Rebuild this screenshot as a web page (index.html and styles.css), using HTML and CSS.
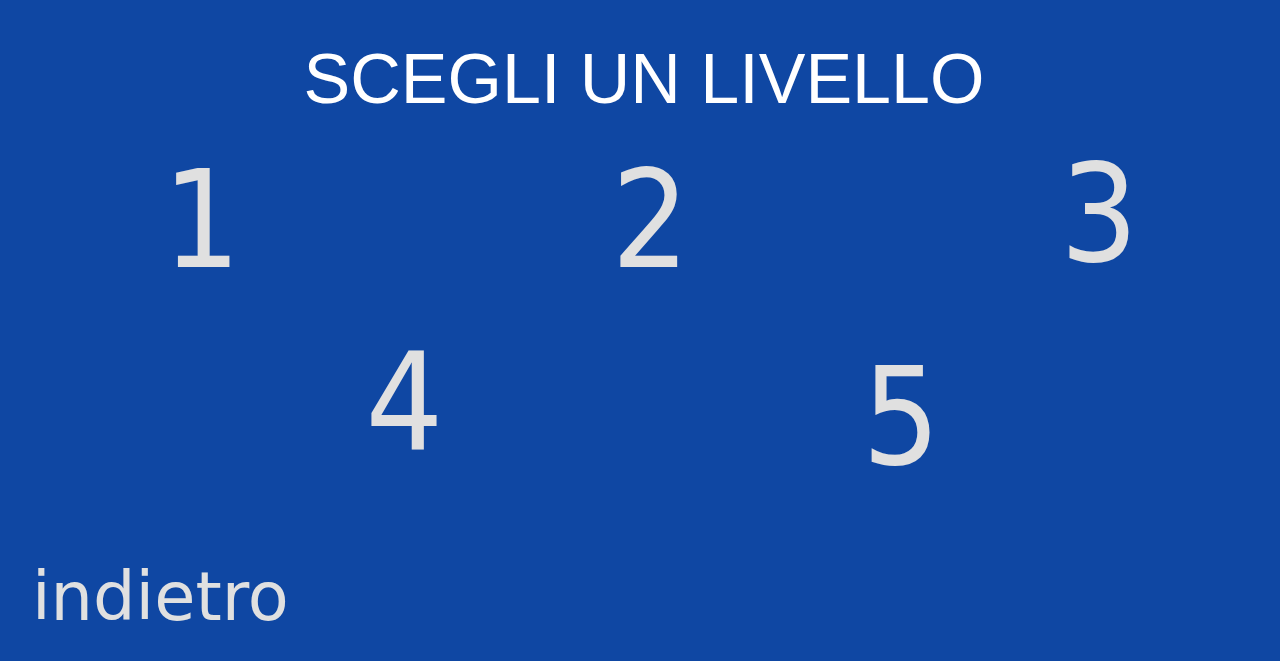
FILE: index.html
```
<!DOCTYPE html>
<html lang="it">
<head>
  <meta charset="utf-8">
  <meta name="viewport" content="width=device-width, initial-scale=1">
  <title>Scegli un livello</title>
  <link rel="stylesheet" href="styles.css">
</head>
<body>
  <h1 class="title">SCEGLI UN LIVELLO</h1>

  <!-- Livelli -->
  <main class="levels">
    <div class="row row-top">
      <button type="button" class="level low">1</button>
      <button type="button" class="level low">2</button>
      <button type="button" class="level">3</button>
    </div>
    <div class="row row-bottom">
      <button type="button" class="level">4</button>
      <button type="button" class="level low">5</button>
    </div>
  </main>

  <!-- Torna al menu -->
  <footer class="footer">
    <a class="back" href="index.html">indietro</a>
  </footer>
</body>
</html>
```
FILE: styles.css
```
* {
  box-sizing: border-box;
}
body {
  margin: 0;
  min-height: 100vh;
  display: flex;
  flex-direction: column;
  background-color: #0f47a3;
  color: #e0e0e0;
  font-family: "DejaVu Sans", sans-serif;
}
.title {
  margin: 0;
  padding: 39px 0 39px 8px;
  color: #ffffff;
  font-family: "Liberation Sans", sans-serif;
  font-size: 70px;
  font-weight: normal;
  line-height: 80px;
  text-align: center;
}
.levels {
  display: flex;
  flex-direction: column;
  gap: 70px;
}
.row {
  display: flex;
  justify-content: space-between;
  align-items: flex-start;
}
.row-top {
  min-height: 118px;
  padding: 0 11% 0 calc(12% + 8px);
}
.row-bottom {
  min-height: 127px;
  padding: 0 calc(26% + 6px) 0 calc(28% + 6px);
}
.level {
  width: 80px;
  padding: 0;
  border: none;
  background: none;
  color: inherit;
  font-family: "DejaVu Sans Condensed", "DejaVu Sans", sans-serif;
  font-size: 136px;
  line-height: 112px;
  text-align: center;
  cursor: pointer;
}
.low {
  align-self: flex-end;
}
.level:hover,
.back:hover {
  color: #ffffff;
}
.footer {
  margin-top: auto;
  padding: 0 32px 24px;
}
.back {
  display: inline-block;
  color: inherit;
  font-size: 67px;
  line-height: 80px;
  text-decoration: none;
}
```
